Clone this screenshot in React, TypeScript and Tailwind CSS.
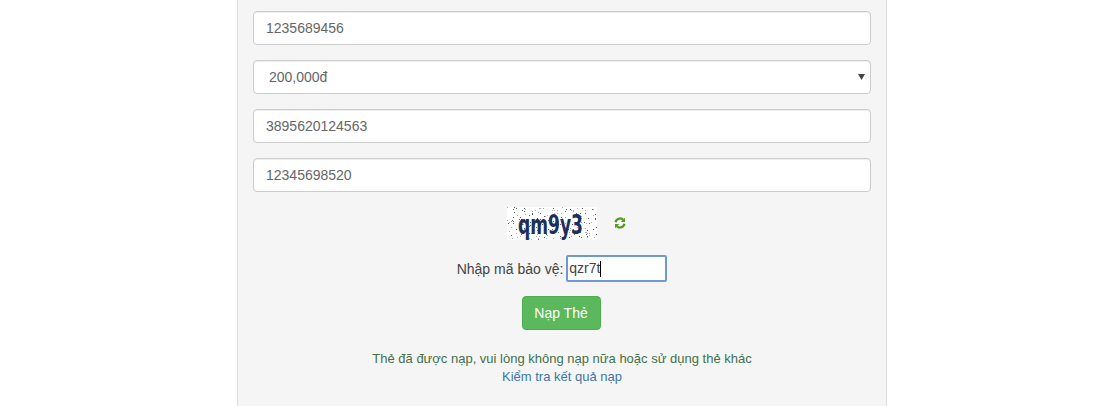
const fieldClass = "h-[34px] w-full rounded-[4px] border border-[#ccc] bg-white px-3 text-[14px] text-[#666] shadow-[inset_0_1px_1px_rgba(0,0,0,0.075)]";

const noise = Array.from({ length: 190 }, (_, i) => ({
  x: (i * 37 + (i * i) % 23) % 90,
  y: (i * 13 + (i * i * 7) % 29) % 33,
}));

function Captcha() {
  return (
    <svg width="90" height="33" viewBox="0 0 90 33" className="block overflow-visible">
      <rect width="90" height="33" fill="#fff" />
      {noise.map((p, i) => (
        <rect key={i} x={p.x} y={p.y} width="1" height="1" fill={i % 2 === 0 ? "#a8acb8" : "#5a6074"} />
      ))}
      <text x="11" y="27" fontFamily="'DejaVu Sans Condensed', 'DejaVu Sans', sans-serif" fontWeight="700" fontSize="26" fill="#1c2f5c" textLength="65" lengthAdjust="spacingAndGlyphs">
        qm9y3
      </text>
    </svg>
  );
}

function Refresh() {
  return (
    <svg width="12" height="12" viewBox="0 0 12 12" fill="none" className="block">
      <path d="M1.6 5.2A4.5 4.5 0 0 1 9.2 2.8" stroke="#4c9a1c" strokeWidth="2.2" />
      <path d="M11 0.8V5H6.8Z" fill="#4c9a1c" />
      <path d="M10.4 6.8A4.5 4.5 0 0 1 2.8 9.2" stroke="#4c9a1c" strokeWidth="2.2" />
      <path d="M1 11.2V7H5.2Z" fill="#4c9a1c" />
    </svg>
  );
}

export default function App() {
  return (
    <div className="h-[406px] w-[1119px] overflow-hidden bg-white font-['Liberation_Sans',Arial,sans-serif] text-[14px] text-[#333]">
      <div className="ml-[237px] h-[406px] w-[650px] border-x border-[#ddd] bg-[#f5f5f5] px-[15px] pt-[11px]">
        <div className="flex flex-col gap-[15px]">
          <div className={`${fieldClass} flex items-center`}>1235689456</div>
          <div className={`${fieldClass} relative flex items-center pl-[15px]`}>
            200,000đ
            <svg width="7" height="6" viewBox="0 0 7 6" className="absolute right-[5px] top-[13px]">
              <path d="M0 0H7L3.5 6Z" fill="#444" />
            </svg>
          </div>
          <div className={`${fieldClass} flex items-center`}>3895620124563</div>
          <div className={`${fieldClass} flex items-center`}>12345698520</div>
        </div>

        <div className="mt-[15px] flex items-center justify-center pl-[9px]">
          <Captcha />
          <div className="mb-[2px] ml-[17px]"><Refresh /></div>
        </div>

        <div className="mt-[15px] flex items-center justify-center">
          <span className="leading-5 text-[#444]">Nhập mã bảo vệ:</span>
          <div className="ml-[3px] flex h-[27px] w-[101px] items-center rounded-[2px] border-2 border-[#6d9bd1] bg-white pl-[1px] text-[14px] text-[#444]">
            qzr7t<span className="h-4 w-px bg-black" />
          </div>
        </div>

        <div className="mt-[14px] flex justify-center pr-[2px]">
          <button className="h-[34px] w-[79px] rounded-[4px] border border-[#4cae4c] bg-[#5cb85c] text-[14px] text-white">
            Nạp Thẻ
          </button>
        </div>

        <div className="mt-5 text-center text-[13px] leading-[18px]">
          <div className="text-[#44704a]">Thẻ đã được nạp, vui lòng không nạp nữa hoặc sử dụng thẻ khác</div>
          <a className="text-[#3f76a8]">Kiểm tra kết quả nạp</a>
        </div>
      </div>
    </div>
  );
}
